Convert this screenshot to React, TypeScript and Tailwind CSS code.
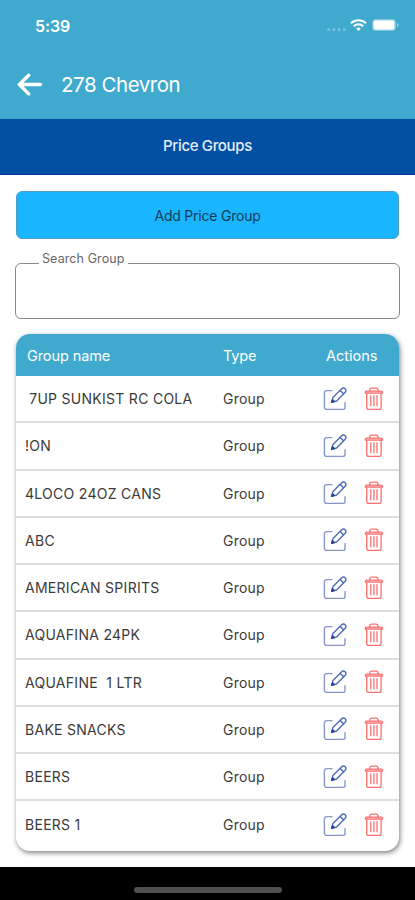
import React from 'react';

interface PriceGroup {
  name: string;
  type: string;
}

const priceGroups: PriceGroup[] = [
  { name: ' 7UP SUNKIST RC COLA', type: 'Group' },
  { name: '!ON', type: 'Group' },
  { name: '4LOCO 24OZ CANS', type: 'Group' },
  { name: 'ABC', type: 'Group' },
  { name: 'AMERICAN SPIRITS', type: 'Group' },
  { name: 'AQUAFINA 24PK', type: 'Group' },
  { name: 'AQUAFINE  1 LTR', type: 'Group' },
  { name: 'BAKE SNACKS', type: 'Group' },
  { name: 'BEERS', type: 'Group' },
  { name: 'BEERS 1', type: 'Group' },
];

const EditIcon: React.FC = () => (
  <svg
    width="24"
    height="24"
    viewBox="0 0 24 24"
    fill="none"
    stroke="#4f6bb2"
    strokeWidth="1.4"
    strokeLinecap="round"
    strokeLinejoin="round"
  >
    <path d="M9 3.6H3.6a2.2 2.2 0 0 0-2.2 2.2v14.4a2.2 2.2 0 0 0 2.2 2.2h16.2a2.2 2.2 0 0 0 2.2-2.2v-4.4" stroke="#8796cb" />
    <path d="M8.6 15.4l1.4-5 8.7-8.6a2.4 2.4 0 0 1 3.5 0 2.4 2.4 0 0 1 0 3.5l-8.6 8.7z" />
    <path d="M17.2 3.4l3.4 3.4" />
    <path d="M8.8 15.2l.7-2.5 1.8 1.8z" fill="#28419b" stroke="#28419b" />
  </svg>
);

const TrashIcon: React.FC = () => (
  <svg
    width="20"
    height="24"
    viewBox="0 0 20 24"
    fill="none"
    stroke="#fa7070"
    strokeWidth="1.3"
    strokeLinecap="round"
    strokeLinejoin="round"
  >
    <path d="M1.3 6.1v-.7a1.2 1.2 0 0 1 1.2-1.2h14.8a1.2 1.2 0 0 1 1.2 1.2v.7z" fill="#fcc9c9" />
    <path d="M5.8 4V3a1.8 1.8 0 0 1 1.8-1.8h4.6A1.8 1.8 0 0 1 14 3v1" />
    <path d="M2.7 6.4v13.8a2.2 2.2 0 0 0 2.2 2.2h10a2.2 2.2 0 0 0 2.2-2.2V6.4" />
    <path d="M6.8 8.7v10M9.9 8.7v10M13 8.7v10" />
  </svg>
);

const StatusBar: React.FC = () => (
  <div className="flex h-[50px] items-end justify-between pb-[14px] pl-[35px] pr-[16px]">
    <span className="text-[16px] font-semibold leading-5 tracking-[-0.1px]">5:39</span>
    <div className="flex h-5 items-start pt-[3px]">
      <svg width="20" height="12" viewBox="0 0 20 12" fill="#fff" fillOpacity="0.3">
        <circle cx="1.7" cy="10.5" r="1.5" />
        <circle cx="6.9" cy="10.5" r="1.5" />
        <circle cx="12.1" cy="10.5" r="1.5" />
        <circle cx="17.3" cy="10.5" r="1.5" />
      </svg>
      <svg className="ml-[3px]" width="17" height="12" viewBox="0 0 17 12" fill="none" stroke="#fff" strokeWidth="2.1">
        <path d="M1 4.3a10.8 10.8 0 0 1 15 0" />
        <path d="M3.8 7.2a6.8 6.8 0 0 1 9.4 0" />
        <path d="M8.5 12L6.2 9.6a3.3 3.3 0 0 1 4.6 0z" fill="#fff" stroke="none" />
      </svg>
      <svg className="ml-[5px]" width="27" height="12" viewBox="0 0 27 12">
        <rect x="0.5" y="0.5" width="23" height="11" rx="3" fill="none" stroke="#fff" strokeOpacity="0.35" />
        <rect x="1.3" y="1.3" width="21.4" height="9.4" rx="1.8" fill="#fff" />
        <path d="M25 4v4c.9-.3 1.5-1.1 1.5-2s-.6-1.7-1.5-2z" fill="#fff" fillOpacity="0.45" />
      </svg>
    </div>
  </div>
);

const App: React.FC = () => {
  return (
    <div className="flex h-[900px] w-full flex-col bg-white font-['Inter',sans-serif] text-[#3a3a3a]">
      {/* Header */}
      <header className="h-[119px] bg-[#40a9ce] text-white">
        <StatusBar />
        <div className="flex h-[69px] items-center pl-[17px]">
          <svg
            width="26"
            height="24"
            viewBox="0 0 26 24"
            fill="none"
            stroke="#fff"
            strokeWidth="3.4"
            strokeLinecap="round"
            strokeLinejoin="round"
          >
            <path d="M23.5 11.5H2.5M11.7 2.3L2.3 11.5l9.4 9.4" />
          </svg>
          <h1 className="ml-[18px] text-[20.5px] font-normal leading-6 tracking-[-0.45px]">278 Chevron</h1>
        </div>
      </header>

      <div className="flex h-14 items-center justify-center border-b border-[#0238a0] bg-[#0250a3] text-[15px] font-medium tracking-[-0.35px] text-[#e4eefa]">
        <span>Price Groups</span>
      </div>

      {/* Content */}
      <main className="flex-1 px-4 pt-4">
        <button className="flex h-12 w-full items-center justify-center rounded-md border border-[#4d9fcb] bg-[#1ab5ff] text-[14px] tracking-[-0.22px] text-[#123d57]">
          Add Price Group
        </button>

        <fieldset className="-mx-px mt-[13px] h-[67px] rounded-md border border-[#8a8a8a] pl-[23px]">
          <legend className="px-[3px] text-[12.5px] leading-[22px] tracking-[0.1px] text-[#666]">
            <span className="relative -top-[4px]">Search Group</span>
          </legend>
          <input className="w-full outline-none" type="text" />
        </fieldset>

        <section className="mt-[15px] h-[517px] overflow-hidden rounded-[14px] bg-white shadow-[1px_2px_5px_rgba(0,0,0,0.5)]">
          <div className="flex h-[42px] items-center bg-[#40a9ce] pt-px text-[14.5px] text-white">
            <span className="w-[207px] pl-[11px] tracking-[-0.1px]">Group name</span>
            <span className="w-[103px] tracking-[-0.2px]">Type</span>
            <span>Actions</span>
          </div>
          {priceGroups.map((group) => (
            <div
              key={group.name}
              className="flex h-[47.25px] items-center border-b-2 border-[#dedede] text-[14px] last:border-b-0"
            >
              <span className="w-[207px] whitespace-pre pl-[9px] tracking-[0.28px]">{group.name}</span>
              <span className="w-[100px] tracking-[0.2px]">{group.type}</span>
              <button aria-label="Edit">
                <EditIcon />
              </button>
              <button aria-label="Delete" className="ml-[17px]">
                <TrashIcon />
              </button>
            </div>
          ))}
        </section>
      </main>

      {/* Home indicator */}
      <footer className="flex h-[33px] items-end justify-center bg-black pb-[7px]">
        <div className="h-[6px] w-[148px] rounded-full bg-[#505050]" />
      </footer>
    </div>
  );
};

export default App;
